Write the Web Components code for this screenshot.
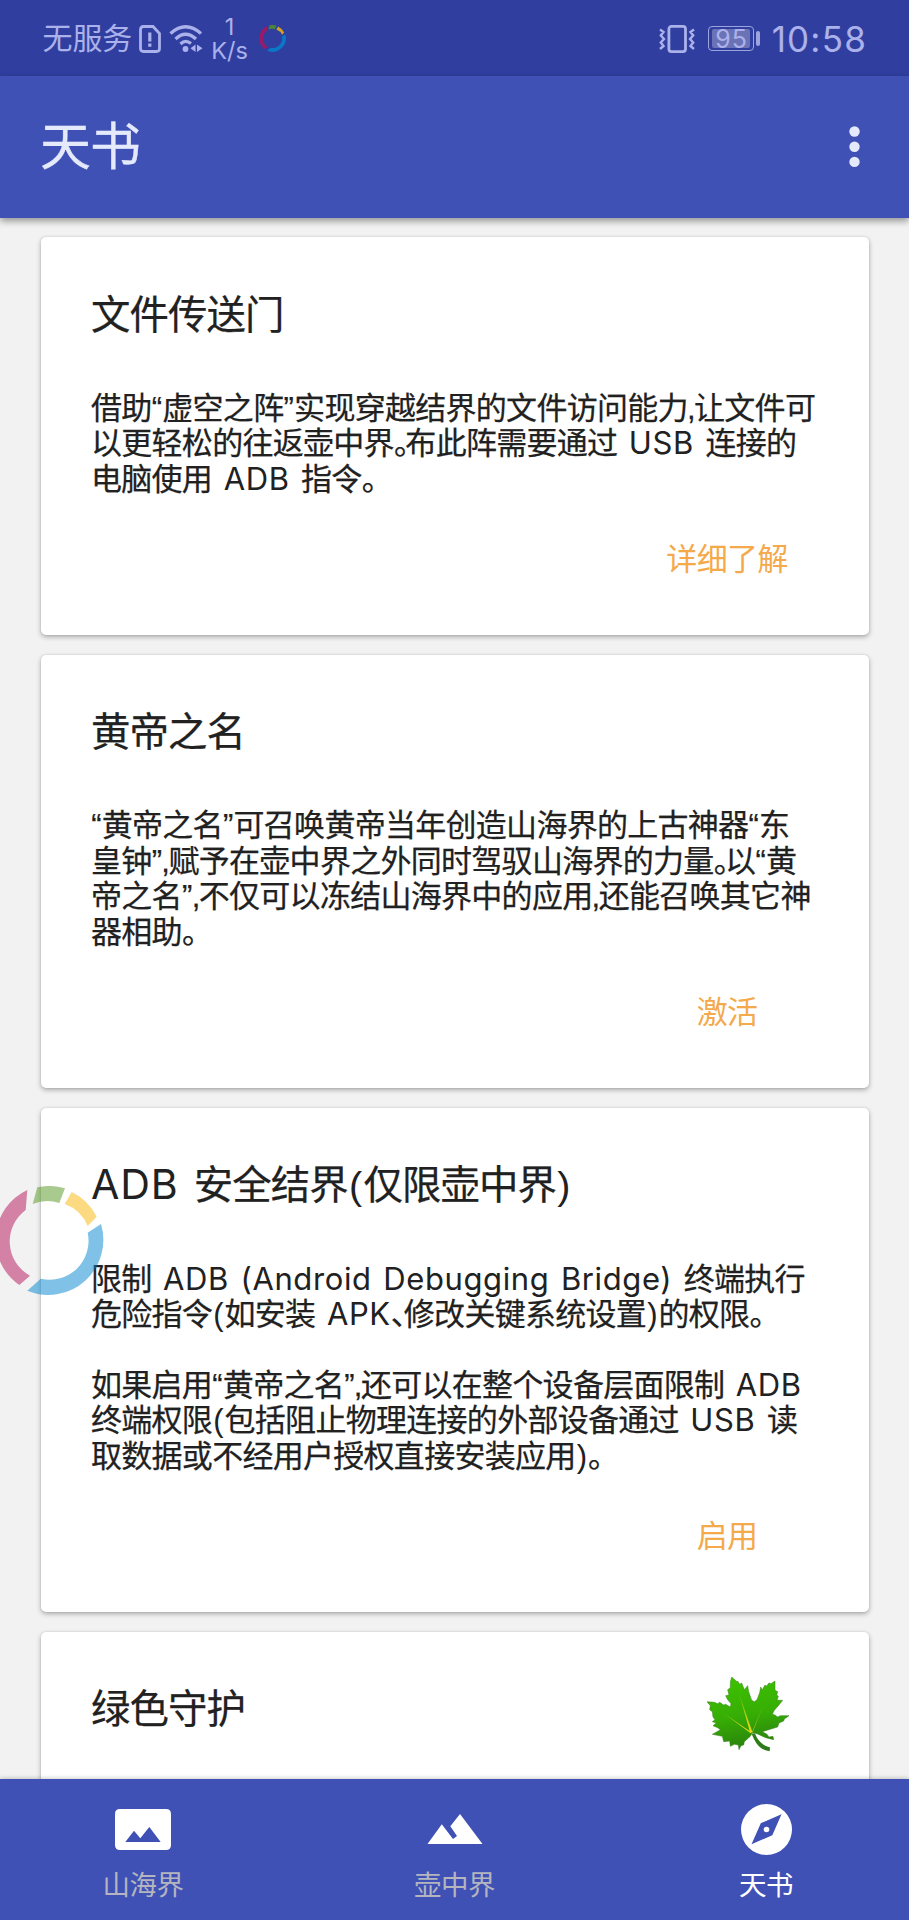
<!DOCTYPE html>
<html lang="zh-CN">
<head>
<meta charset="utf-8">
<title>天书</title>
<style>
body { margin: 0; background: #f2f2f2; font-family: "Liberation Sans", "Noto Sans CJK SC", sans-serif; color: #212121; }
</style>
</head>
<body>
<app-screen>
  <status-bar slot="status"></status-bar>
  <app-bar slot="bar">天书</app-bar>
  <info-card action="详细了解">
    <mixed-text slot="title">文件传送门</mixed-text>
    <mixed-text>借助“虚空之阵”实现穿越结界的文件访问能力,让文件可
以更轻松的往返壶中界。布此阵需要通过 USB 连接的
电脑使用 ADB 指令。</mixed-text>
  </info-card>
  <info-card action="激活">
    <mixed-text slot="title">黄帝之名</mixed-text>
    <mixed-text>“黄帝之名”可召唤黄帝当年创造山海界的上古神器“东
皇钟”,赋予在壶中界之外同时驾驭山海界的力量。以“黄
帝之名”,不仅可以冻结山海界中的应用,还能召唤其它神
器相助。</mixed-text>
  </info-card>
  <info-card action="启用">
    <mixed-text slot="title">ADB 安全结界(仅限壶中界)</mixed-text>
    <mixed-text>限制 ADB (Android Debugging Bridge) 终端执行
危险指令(如安装 APK、修改关键系统设置)的权限。

如果启用“黄帝之名”,还可以在整个设备层面限制 ADB
终端权限(包括阻止物理连接的外部设备通过 USB 读
取数据或不经用户授权直接安装应用)。</mixed-text>
  </info-card>
  <info-card>
    <mixed-text slot="title">绿色守护</mixed-text>
    <leaf-icon slot="icon"></leaf-icon>
  </info-card>
  <nav-bar slot="nav">
    <nav-item label="山海界"><svg width="56" height="41" viewBox="0 0 56 41"><path fill="#fff" fill-rule="evenodd" d="M5 0H51Q56 0 56 5V36Q56 41 51 41H5Q0 41 0 36V5Q0 0 5 0ZM10.300 33H45.700L34.300 18L25.300 29.300L19 21.700Z"/></svg></nav-item>
    <nav-item label="壶中界"><svg width="56" height="30" viewBox="0 0 56 30"><path fill="#fff" d="M.5 30L14.800 10.200L26 25L30 22L23.300 12.300L33 0L55.500 30Z"/></svg></nav-item>
    <nav-item label="天书" active><svg width="51" height="51" viewBox="0 0 51 51"><path fill="#fff" fill-rule="evenodd" d="M25.500 0A25.500 25.500 0 1 1 25.500 51A25.500 25.500 0 1 1 25.500 0ZM40.500 10.300L19.800 19.200L10.500 40.200L31.300 31.200Z"/><circle cx="25.500" cy="25.500" r="2.800" fill="#fff"/></svg></nav-item>
  </nav-bar>
  <ring-icon slot="float"></ring-icon>
</app-screen>

<script>
const define = (name, html, init) => {
  const tpl = document.createElement('template');
  tpl.innerHTML = html;
  customElements.define(name, class extends HTMLElement {
    constructor() {
      super();
      this.attachShadow({ mode: 'open' }).append(tpl.content.cloneNode(true));
    }
    connectedCallback() { if (init) init(this, this.shadowRoot); }
  });
};

/* Four-colour ring, used in the status bar and as the floating button */
define('ring-icon', `
<style>:host{display:block;width:110px;height:110px} svg{display:block;width:100%;height:100%}</style>
<svg viewBox="-55 -55 110 110">
  <path fill="#b5125a" d="M-21.700 -51A55 55 0 0 0 -29.700 44L-19 34.700A39 39 0 0 1 -23.300 -31Z"/>
  <path fill="#53971f" d="M-11.700 -53.700A55 55 0 0 1 16 -52.700L10.300 -38A39 39 0 0 0 -16.300 -37Z"/>
  <path fill="#f9b707" d="M22.700 -49A55 55 0 0 1 47.700 -24.300L38.700 -15A39 39 0 0 0 15.700 -37Z"/>
  <path fill="#0185d1" d="M52 -17A55 55 0 0 1 -21.700 49.700L-8.300 37.800A39 39 0 0 0 38.700 -8.300Z"/>
</svg>`);

define('leaf-icon', `
<style>:host{display:block;width:82px;height:75px} svg{display:block}</style>
<svg width="82" height="75" viewBox="200 168 246 225">
  <defs>
    <linearGradient id="g" x1="0" y1="0" x2=".2" y2="1"><stop offset="0" stop-color="#3fc400"/><stop offset=".6" stop-color="#36ad05"/><stop offset="1" stop-color="#2b850c"/></linearGradient>
    <linearGradient id="v" gradientUnits="userSpaceOnUse" x1="332" y1="334" x2="310" y2="230"><stop offset="0" stop-color="#e6d81a"/><stop offset="1" stop-color="#7fc40c"/></linearGradient>
  </defs>
  <path fill="#2c7a18" d="M334 338C344 364 358 387 388 391L389 379C372 377 354 362 344 338Z"/>
  <path fill="url(#g)" stroke="#377e1c" stroke-width="1.500" d="M274 168L290 182L292 180L298 190L304 186L312 206L322 194L325 212L334 238L342 242L350 236L358 215L361 198L366 206L374 192L378 196L386 186L392 188L404 180L404 208L412 212L409 222L414 226L410 238L427 238L414 254L402 268L396 280L404 282L412 288L420 284L446 284L432 294L430 300L416 306L412 318L392 324L366 332L380 340L386 348L398 346L400 356L376 350L350 338L336 336L330 346L312 362L310 372L302 374L296 386L294 372L282 370L270 376L268 360L250 362L246 346L216 340L230 332L240 326L232 320L218 314L228 306L216 302L224 296L218 288L216 272L208 266L210 254L200 242L222 244L232 248L238 244L250 252L256 250L270 258L272 248L262 236L256 224L266 222L262 206L270 200L270 184Z"/>
  <path fill="url(#v)" d="M336 332L296 218L328 330L250 277L330 336L337 334L370 250Z"/>
</svg>`);

/* Ideographs, Latin runs and narrow punctuation each get their own advance */
define('mixed-text', `
<style>
:host{display:block;-webkit-text-stroke:.25px currentColor}
div{height:var(--line);line-height:var(--line);letter-spacing:-.023em;white-space:pre}
.latin{font-family:Inter,sans-serif;font-size:var(--latin,1em);line-height:1px;letter-spacing:.02em;word-spacing:.07em;-webkit-text-stroke:0}
.p{display:inline-block;letter-spacing:0}
.q{width:.345em;text-align:center}
.c{width:.2em;text-indent:-.03em}
.b{width:.4em;text-align:center;-webkit-text-stroke:0}
.s{width:.37em}
.d{width:.42em}
</style><section></section>`, (host, root) => {
  const kinds = { '“': 'p q', '”': 'p q', ',': 'p c', '(': 'p b', ')': 'p b', '。': 'p s', '、': 'p d' };
  const out = root.querySelector('section');
  out.replaceChildren();
  for (const line of host.textContent.split('\n')) {
    const row = document.createElement('div');
    for (const part of line.match(/ ?\(?[A-Za-z]+[A-Za-z ]*(?:\) )?| +|[“”,()。、]|[^A-Za-z “”,()。、]+/g) || []) {
      const s = document.createElement('span');
      s.textContent = part;
      s.className = kinds[part] || (/^[A-Za-z ()]+$/.test(part) ? 'latin' : '');
      row.append(s);
    }
    out.append(row);
  }
});

define('status-bar', `
<style>
:host{display:flex;box-sizing:border-box;height:76px;padding:1px 42px 0 42.500px;align-items:center;background:#303f9f;color:#abb1ea}
.net{font-size:30px;line-height:40px;letter-spacing:-.1px;width:96.500px}
svg{display:block}
.speed{width:40px;margin-left:6.500px;font-family:Inter,sans-serif;font-size:23.500px;line-height:24px;text-align:center;white-space:nowrap}
ring-icon{width:27px;height:27px;margin-left:9px;opacity:.8}
.space{flex:1}
.bat{display:grid;place-items:center;box-sizing:border-box;width:46px;height:25px;border:1.500px solid #9da3dd;border-radius:4px;margin-left:13px;padding:1.500px}
.bat span{width:38px;height:19px;background:#6b72b5;border-radius:2px;text-align:center;font:25px/20px Inter,sans-serif;letter-spacing:1px;text-indent:1px}
.nub{width:4px;height:15px;border-radius:2px;background:#9da3dd;margin-left:1.500px}
.time{font:35px/40px Inter,sans-serif;letter-spacing:1.200px;width:95.500px;text-align:right;white-space:nowrap;margin-left:12px}
</style>
<span class="net">无服务</span>
<svg width="22" height="28" viewBox="0 0 22 28" fill="none" stroke="#abb1ea" stroke-width="2.800"><path d="M4.500 1.500H14L20.500 8.500V23.500Q20.500 26.500 17.500 26.500H4.500Q1.500 26.500 1.500 23.500V4.500Q1.500 1.500 4.500 1.500Z"/><path stroke-width="3.200" d="M10.800 7.500V16.500M10.800 18.500V21.800"/></svg>
<svg style="margin-left:8px" width="34" height="28" viewBox="0 0 34 28" fill="none" stroke="#abb1ea" stroke-width="3.200"><path d="M1.500 8.500Q16.500 -5 32 8.500M6.500 14Q16.500 4.500 27 14M11.500 19Q16.500 14 22 18.500"/><g fill="#abb1ea" stroke="none"><circle cx="16.500" cy="24" r="2.900"/><path d="M26.500 19.500V27L21.500 23.200ZM28 19.500V27L33.500 23.200Z"/></g></svg>
<div class="speed"><div>1</div><div>K/s</div></div>
<ring-icon></ring-icon>
<span class="space"></span>
<svg width="36" height="28" viewBox="0 0 36 28" fill="none" stroke="#abb1ea" stroke-width="2.800"><rect x="9.900" y="1.400" width="16.600" height="25.200" rx="2.500"/><path stroke-width="2.400" d="M1 4.500L4.500 7L1.800 10.500L5 14L1.800 17.500L4.500 21L1 24M35 4.500L31.500 7L34.200 10.500L31 14L34.200 17.500L31.500 21L35 24"/></svg>
<div class="bat"><span>95</span></div><i class="nub"></i>
<span class="time">10:58</span>`);

define('app-bar', `
<style>
:host{display:flex;box-sizing:border-box;height:141.500px;padding:0 49.500px 0 40px;align-items:center;justify-content:space-between;background:#3f51b5;color:#e4e9fc;box-shadow:0 3px 7px rgba(0,0,0,.4);font-size:51px;line-height:70px;letter-spacing:-1px;position:relative}
span{padding-top:3px;-webkit-text-stroke:.4px currentColor}
svg{display:block}
</style><span><slot></slot></span>
<svg width="11" height="42" fill="#e4e9fc"><circle cx="5.500" cy="5.500" r="5.200"/><circle cx="5.500" cy="20.700" r="5.200"/><circle cx="5.500" cy="35.900" r="5.200"/></svg>`);

define('info-card', `
<style>
:host{display:block;flex:none;box-sizing:border-box;padding:50.500px 0 0 50.500px;border-radius:5px;background:#fff;box-shadow:0 2px 5px rgba(0,0,0,.3),0 0 2px rgba(0,0,0,.12);font-size:31px;--line:35.450px}
header{display:flex;height:54px;justify-content:space-between;font-size:39.400px;--line:54px;--latin:1.045em;margin-bottom:49.300px}
::slotted([slot=icon]){margin:-5px 80px 0 0}
footer{display:flex;height:137.900px;justify-content:flex-end}
button{all:unset;width:200px;height:60px;margin:32.500px 42px 0 0;text-align:center;color:#f4a94b;font-size:31px;line-height:60px;letter-spacing:-.67px}
</style>
<header><slot name="title"></slot><slot name="icon"></slot></header>
<slot></slot>
<footer><button></button></footer>`, (host, root) => {
  root.querySelector('button').textContent = host.getAttribute('action') || '';
});

define('nav-bar', `
<style>:host{display:grid;grid-template-columns:repeat(3,311.600px);justify-content:center;height:141px;background:#3f51b5;box-shadow:0 -1px 4px rgba(0,0,0,.2);position:relative}</style><slot></slot>`);

define('nav-item', `
<style>
:host{display:flex;flex-direction:column;align-items:center;padding-top:23.500px;color:#b4b5bf}
:host([active]){color:#fff}
.icon{display:grid;place-items:center;height:53px}
::slotted(svg){display:block}
b{font-weight:400;font-size:27.500px;line-height:40px;letter-spacing:-.5px;margin-top:10px}
</style><div class="icon"><slot></slot></div><b></b>`, (host, root) => {
  root.querySelector('b').textContent = host.getAttribute('label');
});

define('app-screen', `
<style>
:host{display:flex;flex-direction:column;height:1920px;overflow:hidden;position:relative}
main{display:flex;flex-direction:column;flex:1;min-height:0;gap:19.700px;padding:19.500px 40px 0 40.500px;overflow:hidden}
::slotted([slot=float]){position:absolute;left:-6px;top:1186px;opacity:.5}
</style>
<slot name="status"></slot><slot name="bar"></slot>
<main><slot></slot></main>
<slot name="nav"></slot><slot name="float"></slot>`);
</script>
</body>
</html>
